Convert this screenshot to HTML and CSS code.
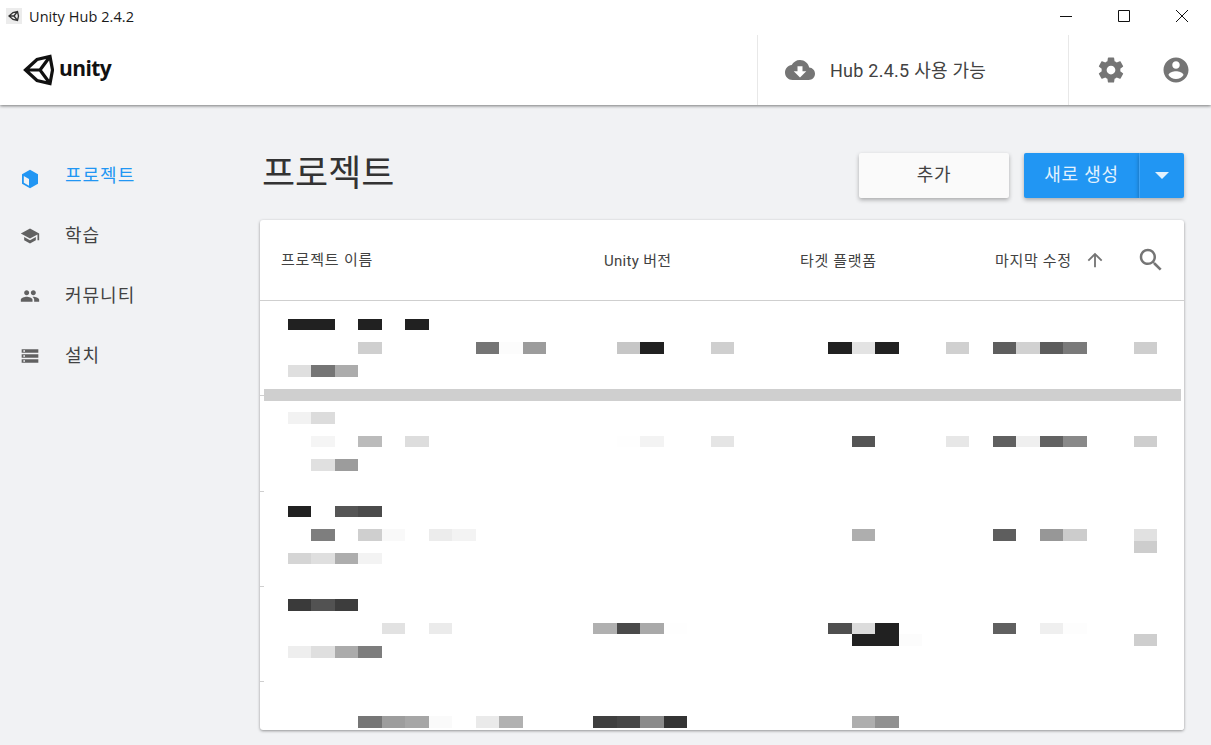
FILE: index.html
```html
<!DOCTYPE html>
<html lang="ko">
<head>
<meta charset="utf-8">
<title>Unity Hub 2.4.2</title>
<link rel="stylesheet" href="styles.css">
</head>
<body>
<header class="chrome">
  <div class="titlebar">
    <span class="app-icon">
      <svg viewBox="0 0 16 16" width="16" height="16"><path class="app-glyph" d="M3 8l4-3.5 4.5-1 1 4.5-1 4.5-4.5-1zM3 8h5M8 8l3.5-4.5M8 8l3.5 4.5"/></svg>
    </span>
    <span class="app-title">Unity Hub 2.4.2</span>
    <div class="win-controls">
      <svg class="win-btn" viewBox="0 0 12 12" width="12" height="12"><path class="win-line" d="M0 6.5h12"/></svg>
      <svg class="win-btn" viewBox="0 0 12 12" width="12" height="12"><path class="win-line" d="M.5.5h11v11H.5z"/></svg>
      <svg class="win-btn" viewBox="0 0 12 12" width="12" height="12"><path class="win-line" d="M0 0l12 12M12 0L0 12"/></svg>
    </div>
  </div>
  <div class="topbar">
    <div class="logo">
      <svg class="logo-mark" viewBox="0 0 31 32" width="31" height="32"><path class="logo-stroke" d="M2.5 16L14 5.5 27 2.5 29.5 16 27 29.5 14 26.5zM2.5 16H17M17 16L27 2.5M17 16L27 29.5"/></svg>
      <span class="logo-text">unity</span>
    </div>
    <div class="update">
      <svg class="icon-cloud" viewBox="0 0 24 24"><path d="M19.35 10.04C18.67 6.59 15.64 4 12 4 9.11 4 6.6 5.64 5.35 8.04 2.34 8.36 0 10.91 0 14c0 3.31 2.69 6 6 6h13c2.76 0 5-2.24 5-5 0-2.64-2.05-4.78-4.65-4.96zM17 13l-5 5-5-5h3V9h4v4h3z"/></svg>
      <span class="update-text">Hub 2.4.5 사용 가능</span>
    </div>
    <div class="top-actions">
      <svg class="icon-top" viewBox="0 0 24 24"><path d="M19.43 12.98c.04-.32.07-.64.07-.98s-.03-.66-.07-.98l2.11-1.65c.19-.15.24-.42.12-.64l-2-3.46c-.12-.22-.39-.3-.61-.22l-2.49 1c-.52-.4-1.08-.73-1.69-.98l-.38-2.65C14.46 2.18 14.25 2 14 2h-4c-.25 0-.46.18-.49.42l-.38 2.65c-.61.25-1.17.59-1.69.98l-2.49-1c-.23-.09-.49 0-.61.22l-2 3.46c-.13.22-.07.49.12.64l2.11 1.65c-.04.32-.07.65-.07.98s.03.66.07.98l-2.11 1.65c-.19.15-.24.42-.12.64l2 3.46c.12.22.39.3.61.22l2.49-1c.52.4 1.08.73 1.69.98l.38 2.65c.03.24.24.42.49.42h4c.25 0 .46-.18.49-.42l.38-2.65c.61-.25 1.17-.59 1.69-.98l2.49 1c.23.09.49 0 .61-.22l2-3.46c.12-.22.07-.49-.12-.64l-2.11-1.65zM12 15.5c-1.93 0-3.5-1.57-3.5-3.5s1.57-3.5 3.5-3.5 3.5 1.57 3.5 3.5-1.57 3.5-3.5 3.5z"/></svg>
      <svg class="icon-top" viewBox="0 0 24 24"><path d="M12 2C6.48 2 2 6.48 2 12s4.48 10 10 10 10-4.48 10-10S17.52 2 12 2zm0 3c1.66 0 3 1.34 3 3s-1.34 3-3 3-3-1.34-3-3 1.34-3 3-3zm0 14.2c-2.5 0-4.71-1.28-6-3.22.03-1.99 4-3.08 6-3.08 1.99 0 5.97 1.09 6 3.08-1.29 1.94-3.5 3.22-6 3.22z"/></svg>
    </div>
  </div>
</header>
<div class="main">
  <nav class="sidebar">
    <a class="nav-item nav-active">
      <svg class="nav-icon nav-icon-box" viewBox="0 0 20 20"><path class="box-outer" d="M10 .8l8 4.4v9.6l-8 4.4-8-4.4V5.200z"/><path class="box-face" d="M3.800 7l5.200 2.900v6.800l-5.200-2.900z"/></svg>
      <span>프로젝트</span>
    </a>
    <a class="nav-item">
      <svg class="nav-icon" viewBox="0 0 24 24"><path d="M5 13.18v4L12 21l7-3.82v-4L12 17l-7-3.82zM12 3L1 9l11 6 9-4.91V17h2V9L12 3z"/></svg>
      <span>학습</span>
    </a>
    <a class="nav-item">
      <svg class="nav-icon" viewBox="0 0 24 24"><path d="M16 11c1.66 0 2.99-1.34 2.99-3S17.66 5 16 5c-1.66 0-3 1.34-3 3s1.34 3 3 3zm-8 0c1.66 0 2.99-1.34 2.99-3S9.66 5 8 5C6.34 5 5 6.34 5 8s1.34 3 3 3zm0 2c-2.33 0-7 1.17-7 3.5V19h14v-2.5c0-2.33-4.67-3.5-7-3.5zm8 0c-.29 0-.62.02-.97.05 1.16.84 1.97 1.97 1.97 3.45V19h6v-2.5c0-2.33-4.67-3.5-7-3.5z"/></svg>
      <span>커뮤니티</span>
    </a>
    <a class="nav-item">
      <svg class="nav-icon" viewBox="0 0 24 24"><path d="M2 20h20v-4H2v4zm2-3h2v2H4v-2zM2 4v4h20V4H2zm4 3H4V5h2v2zm-4 7h20v-4H2v4zm2-3h2v2H4v-2z"/></svg>
      <span>설치</span>
    </a>
  </nav>
  <main class="content">
    <div class="page-head">
      <h1 class="page-title">프로젝트</h1>
      <div class="page-actions">
        <button class="btn btn-add">추가</button>
        <div class="split">
          <button class="btn btn-new">새로 생성</button>
          <button class="btn btn-drop"><span class="caret"></span></button>
        </div>
      </div>
    </div>
    <section class="card">
      <div class="table-head">
        <span class="th th-name">프로젝트 이름</span>
        <span class="th th-version">Unity 버전</span>
        <span class="th">타겟 플랫폼</span>
        <span class="th th-sort">마지막 수정
          <svg class="icon-sort" viewBox="0 0 24 24"><path d="M4 12l1.41 1.41L11 7.83V20h2V7.83l5.58 5.59L20 12l-8-8-8 8z"/></svg>
        </span>
        <svg class="icon-search" viewBox="0 0 24 24"><path d="M15.5 14h-.79l-.28-.27C15.41 12.59 16 11.11 16 9.5 16 5.91 13.09 3 9.5 3S3 5.91 3 9.5 5.91 16 9.5 16c1.61 0 3.09-.59 4.23-1.57l.27.28v.79l5 4.99L20.49 19l-4.99-5zm-6 0C7.01 14 5 11.99 5 9.5S7.01 5 9.5 5 14 7.01 14 9.5 11.99 14 9.5 14z"/></svg>
      </div>
      <div class="table-body">
        <div class="row"></div>
        <div class="row"></div>
        <div class="row"></div>
        <div class="row"></div>
        <div class="mosaic">
          <i style="grid-area:1/2;background:#212121"></i><i style="grid-area:1/3;background:#212121"></i><i style="grid-area:1/5;background:#212121"></i><i style="grid-area:1/7;background:#212121"></i>
          <i style="grid-area:3/5;background:#cfcfcf"></i><i style="grid-area:3/10;background:#757575"></i><i style="grid-area:3/11;background:#fcfcfc"></i><i style="grid-area:3/12;background:#9c9c9c"></i><i style="grid-area:3/16;background:#c6c6c6"></i><i style="grid-area:3/17;background:#212121"></i><i style="grid-area:3/20;background:#cfcfcf"></i><i style="grid-area:3/25;background:#212121"></i><i style="grid-area:3/26;background:#e3e3e3"></i><i style="grid-area:3/27;background:#212121"></i><i style="grid-area:3/30;background:#d0d0d0"></i><i style="grid-area:3/32;background:#5e5e5e"></i><i style="grid-area:3/33;background:#d1d1d1"></i><i style="grid-area:3/34;background:#5c5c5c"></i><i style="grid-area:3/35;background:#7a7a7a"></i><i style="grid-area:3/38;background:#cecece"></i>
          <i style="grid-area:5/2;background:#dfdfdf"></i><i style="grid-area:5/3;background:#757575"></i><i style="grid-area:5/4;background:#acacac"></i>
          <i class="band"></i>
          <i style="grid-area:9/2;background:#f2f2f2"></i><i style="grid-area:9/3;background:#dcdcdc"></i>
          <i style="grid-area:11/3;background:#f5f5f5"></i><i style="grid-area:11/5;background:#bbbbbb"></i><i style="grid-area:11/7;background:#dddddd"></i><i style="grid-area:11/16;background:#fefefe"></i><i style="grid-area:11/17;background:#f3f3f3"></i><i style="grid-area:11/20;background:#e5e5e5"></i><i style="grid-area:11/26;background:#555555"></i><i style="grid-area:11/30;background:#e7e7e7"></i><i style="grid-area:11/32;background:#606060"></i><i style="grid-area:11/33;background:#efefef"></i><i style="grid-area:11/34;background:#626262"></i><i style="grid-area:11/35;background:#898989"></i><i style="grid-area:11/38;background:#cecece"></i>
          <i style="grid-area:13/3;background:#e0e0e0"></i><i style="grid-area:13/4;background:#9c9c9c"></i>
          <i style="grid-area:17/2;background:#212121"></i><i style="grid-area:17/4;background:#555555"></i><i style="grid-area:17/5;background:#4b4b4b"></i>
          <i style="grid-area:19/3;background:#7e7e7e"></i><i style="grid-area:19/5;background:#cfcfcf"></i><i style="grid-area:19/6;background:#f9f9f9"></i><i style="grid-area:19/8;background:#ececec"></i><i style="grid-area:19/9;background:#f3f3f3"></i><i style="grid-area:19/26;background:#aeaeae"></i><i style="grid-area:19/32;background:#5e5e5e"></i><i style="grid-area:19/34;background:#979797"></i><i style="grid-area:19/35;background:#cccccc"></i><i style="grid-area:19/38;background:#e1e1e1"></i>
          <i style="grid-area:20/38;background:#cdcdcd"></i>
          <i style="grid-area:21/2;background:#d5d5d5"></i><i style="grid-area:21/3;background:#dfdfdf"></i><i style="grid-area:21/4;background:#adadad"></i><i style="grid-area:21/5;background:#f3f3f3"></i>
          <i style="grid-area:25/2;background:#3a3a3a"></i><i style="grid-area:25/3;background:#525252"></i><i style="grid-area:25/4;background:#3d3d3d"></i>
          <i style="grid-area:27/6;background:#e2e2e2"></i><i style="grid-area:27/8;background:#ebebeb"></i><i style="grid-area:27/15;background:#b0b0b0"></i><i style="grid-area:27/16;background:#4a4a4a"></i><i style="grid-area:27/17;background:#a9a9a9"></i><i style="grid-area:27/18;background:#fefefe"></i><i style="grid-area:27/25;background:#4f4f4f"></i><i style="grid-area:27/26;background:#dcdcdc"></i><i style="grid-area:27/27;background:#212121"></i><i style="grid-area:27/32;background:#606060"></i><i style="grid-area:27/34;background:#efefef"></i><i style="grid-area:27/35;background:#fdfdfd"></i>
          <i style="grid-area:28/26;background:#212121"></i><i style="grid-area:28/27;background:#212121"></i><i style="grid-area:28/28;background:#fcfcfc"></i><i style="grid-area:28/38;background:#cecece"></i>
          <i style="grid-area:29/2;background:#eeeeee"></i><i style="grid-area:29/3;background:#dfdfdf"></i><i style="grid-area:29/4;background:#ababab"></i><i style="grid-area:29/5;background:#7d7d7d"></i>
          <i style="grid-area:35/5;background:#767676"></i><i style="grid-area:35/6;background:#9d9d9d"></i><i style="grid-area:35/7;background:#a6a6a6"></i><i style="grid-area:35/8;background:#fafafa"></i><i style="grid-area:35/10;background:#eaeaea"></i><i style="grid-area:35/11;background:#b1b1b1"></i><i style="grid-area:35/15;background:#3f3f3f"></i><i style="grid-area:35/16;background:#464646"></i><i style="grid-area:35/17;background:#8a8a8a"></i><i style="grid-area:35/18;background:#343434"></i><i style="grid-area:35/26;background:#aeaeae"></i><i style="grid-area:35/27;background:#919191"></i>
        </div>
      </div>
    </section>
  </main>
</div>
</body>
</html>
```
FILE: styles.css
```css
* { box-sizing: border-box; }
html, body { margin: 0; height: 100%; }
body {
  width: 1211px;
  height: 745px;
  overflow: hidden;
  background: #f1f2f4;
  color: #424242;
  font-family: Roboto, "Noto Sans CJK KR", sans-serif;
}

/* window chrome */
.chrome { position: relative; z-index: 2; background: #fff; box-shadow: 0 1px 3px rgba(0,0,0,.5); }
.titlebar { height: 35px; display: flex; align-items: center; padding: 0 23px 3px 6px; }
.app-icon { width: 16px; height: 16px; background: #ececec; margin-right: 7px; display: flex; }
.app-glyph { fill: none; stroke: #333; stroke-width: 1.3; }
.app-title { font: 14.5px "Open Sans", sans-serif; letter-spacing: .07px; color: #1a1a1a; }
.win-controls { margin-left: auto; display: flex; gap: 46px; }
.win-btn { display: block; }
.win-line { fill: none; stroke: #111; stroke-width: 1; }

.topbar { height: 70px; display: flex; align-items: stretch; }
.logo { width: 757px; padding-left: 23px; display: flex; align-items: center; gap: 5px; }
.logo-mark { flex: none; }
.logo-stroke { fill: none; stroke: #111; stroke-width: 3.2; stroke-linejoin: miter; }
.logo-text { font: 700 21px "Open Sans", sans-serif; letter-spacing: -.6px; color: #111; padding-bottom: 4px; }
.update { width: 312px; border-left: 1px solid #e8e8e8; border-right: 1px solid #e8e8e8; display: flex; align-items: center; padding-left: 27px; gap: 15px; }
.icon-cloud { width: 30px; height: 30px; fill: #757575; flex: none; }
.update-text { font-size: 18px; color: #424242; letter-spacing: .25px; padding-bottom: 2px; }
.top-actions { display: flex; align-items: center; gap: 35px; padding-left: 27px; }
.icon-top { width: 30px; height: 30px; fill: #757575; display: block; }

/* layout */
.main { display: flex; height: 640px; }
.sidebar { width: 260px; padding: 39px 0 0 20px; flex: none; }
.nav-item { height: 60.1px; display: flex; align-items: center; gap: 25px; font-size: 18px; letter-spacing: 1px; color: #424242; }
.nav-icon { width: 20px; height: 20px; fill: #616161; flex: none; margin-top: 3px; }
.nav-icon-box { margin-top: 10px; }
.nav-active { color: #2196f3; }
.box-outer { fill: #2196f3; }
.box-face { fill: #f1f2f4; }

.content { width: 924px; padding-top: 48px; }
.page-head { display: flex; justify-content: space-between; height: 45px; }
.page-title { margin: 0 0 0 2px; font-size: 36px; font-weight: 400; line-height: 42px; color: #333; }
.page-actions { display: flex; gap: 15px; }
.btn { border: 0; padding: 0 0 5px; border-radius: 2px; font: inherit; font-size: 18px; letter-spacing: .8px; height: 45px; box-shadow: 0 2px 4px rgba(0,0,0,.3); }
.btn-add { width: 150px; background: #fafafa; color: #424242; }
.split { display: flex; gap: 0; }
.btn-new { width: 115px; background: #2196f3; color: #e3f2fd; border-radius: 2px 0 0 2px; }
.btn-drop { width: 45px; padding: 0; background: #2196f3; border-left: 1px solid #3fa3f4; border-radius: 0 2px 2px 0; display: flex; align-items: center; justify-content: center; }
.caret { width: 0; height: 0; border-left: 7px solid transparent; border-right: 7px solid transparent; border-top: 7px solid #e3f2fd; }

.card { margin-top: 22px; height: 510px; background: #fff; border-radius: 3px; box-shadow: 0 1px 3px rgba(0,0,0,.4); overflow: hidden; }
.table-head { height: 81px; border-bottom: 1px solid #cfcfcf; display: grid; grid-template-columns: 323px 196px 195px 141.4px 1fr; align-items: center; padding-left: 21px; font-size: 15px; color: #424242; }
.th { letter-spacing: .65px; margin-top: -2px; }
.th-name { margin-top: -3px; letter-spacing: .8px; }
.th-version { letter-spacing: .3px; }
.th-sort { display: flex; align-items: center; gap: 12px; }
.icon-sort { width: 22px; height: 22px; fill: #757575; flex: none; margin-top: 2px; }
.icon-search { width: 30px; height: 30px; fill: #757575; }

.table-body { position: relative; height: 429px; }
.row { height: 95.3px; border-bottom: 1px solid #cfcfcf; }
.mosaic {
  position: absolute;
  top: 0; right: 0; bottom: 0; left: 4px;
  background: #fff;
  padding-top: 18px;
  display: grid;
  grid-template-columns: 24px repeat(19, 23px 24px);
  grid-template-rows: 11px 12px 12px 11px 12px 12px 12px 11px 12px 12px 11px 12px 12px 11px 12px 12px 11px 12px 12px 12px 11px 12px 12px 11px 12px 12px 11px 12px 12px 11px 12px 12px 11px 12px 12px;
}
.band { grid-row: 7; grid-column: 1 / -1; background: #cfcfcf; }
```
